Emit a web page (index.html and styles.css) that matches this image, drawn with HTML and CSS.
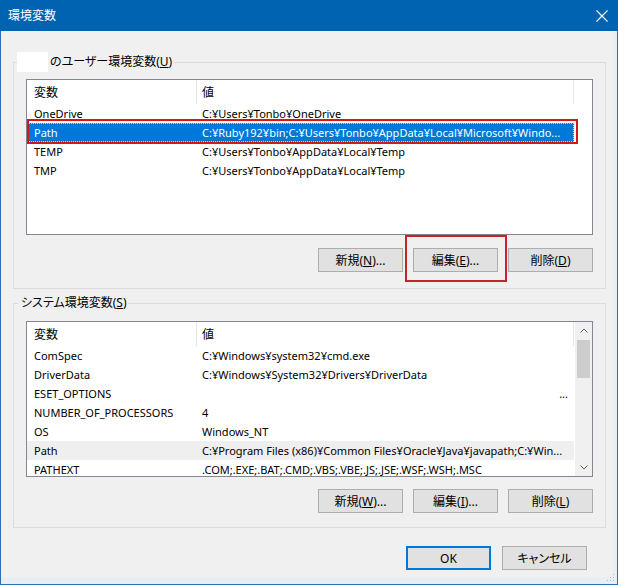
FILE: index.html
```html
<!DOCTYPE html>
<html lang="ja">
<head>
<meta charset="utf-8">
<title>環境変数</title>
<link rel="stylesheet" href="styles.css">
</head>
<body>
<div class="window">
  <div class="titlebar">
    <span class="title">環境変数</span>
    <svg class="close" width="12" height="12" viewBox="0 0 12 12"><path d="M0.5 0.5L11.5 11.5M11.5 0.5L0.5 11.5" stroke="#fff" stroke-width="1.1" fill="none"/></svg>
  </div>
  <div class="client">
    <fieldset class="group group-user">
      <legend><span class="masked"></span>のユーザー環境変数(<u>U</u>)</legend>
      <div class="group-inner inner-user">
        <div class="list">
          <div class="list-body">
            <div class="list-head">
              <div class="cell-name">変数</div>
              <div class="cell-value">値</div>
            </div>
            <div class="row"><div class="cell-name">OneDrive</div><div class="cell-value">C:¥Users¥Tonbo¥OneDrive</div></div>
            <div class="row selected"><div class="cell-name">Path</div><div class="cell-value">C:¥Ruby192¥bin;C:¥Users¥Tonbo¥AppData¥Local¥Microsoft¥Windo...</div></div>
            <div class="row"><div class="cell-name">TEMP</div><div class="cell-value">C:¥Users¥Tonbo¥AppData¥Local¥Temp</div></div>
            <div class="row"><div class="cell-name">TMP</div><div class="cell-value">C:¥Users¥Tonbo¥AppData¥Local¥Temp</div></div>
          </div>
        </div>
        <div class="buttons">
          <button class="btn">新規(<u>N</u>)...</button>
          <button class="btn">編集(<u>E</u>)...</button>
          <button class="btn">削除(<u>D</u>)</button>
        </div>
      </div>
    </fieldset>

    <fieldset class="group group-system">
      <legend>システム環境変数(<u>S</u>)</legend>
      <div class="group-inner inner-system">
        <div class="list">
          <div class="list-body">
            <div class="list-head">
              <div class="cell-name">変数</div>
              <div class="cell-value">値</div>
            </div>
            <div class="row"><div class="cell-name">ComSpec</div><div class="cell-value">C:¥Windows¥system32¥cmd.exe</div></div>
            <div class="row"><div class="cell-name">DriverData</div><div class="cell-value">C:¥Windows¥System32¥Drivers¥DriverData</div></div>
            <div class="row"><div class="cell-name">ESET_OPTIONS</div><div class="cell-value value-right">...</div></div>
            <div class="row"><div class="cell-name">NUMBER_OF_PROCESSORS</div><div class="cell-value">4</div></div>
            <div class="row"><div class="cell-name">OS</div><div class="cell-value">Windows_NT</div></div>
            <div class="row hover"><div class="cell-name">Path</div><div class="cell-value">C:¥Program Files (x86)¥Common Files¥Oracle¥Java¥javapath;C:¥Win...</div></div>
            <div class="row"><div class="cell-name">PATHEXT</div><div class="cell-value">.COM;.EXE;.BAT;.CMD;.VBS;.VBE;.JS;.JSE;.WSF;.WSH;.MSC</div></div>
          </div>
          <div class="scrollbar">
            <div class="sb-btn"><svg width="8" height="5" viewBox="0 0 8 5"><path d="M0.5 4.5L4 1L7.5 4.5" stroke="#606060" fill="none"/></svg></div>
            <div class="sb-track"><div class="sb-thumb"></div></div>
            <div class="sb-btn"><svg width="8" height="5" viewBox="0 0 8 5"><path d="M0.5 0.5L4 4L7.5 0.5" stroke="#606060" fill="none"/></svg></div>
          </div>
        </div>
        <div class="buttons">
          <button class="btn">新規(<u>W</u>)...</button>
          <button class="btn">編集(<u>I</u>)...</button>
          <button class="btn">削除(<u>L</u>)</button>
        </div>
      </div>
    </fieldset>

    <div class="footer">
      <button class="btn btn-default">OK</button>
      <button class="btn">キャンセル</button>
    </div>
  </div>

  <div class="mark mark-row"></div>
  <div class="mark mark-edit"></div>
  <svg class="grip" width="9" height="9" viewBox="0 0 9 9">
    <rect x="7" y="1" width="1" height="1" fill="#b8b8b8"/>
    <rect x="4" y="4" width="1" height="1" fill="#b8b8b8"/>
    <rect x="7" y="4" width="1" height="1" fill="#b8b8b8"/>
    <rect x="1" y="7" width="1" height="1" fill="#b8b8b8"/>
    <rect x="4" y="7" width="1" height="1" fill="#b8b8b8"/>
    <rect x="7" y="7" width="1" height="1" fill="#b8b8b8"/>
  </svg>
</div>
</body>
</html>
```

FILE: styles.css
```css
* { box-sizing: border-box; }

html, body {
  margin: 0;
  padding: 0;
}

body {
  width: 618px;
  height: 585px;
  overflow: hidden;
  background: #fff;
  font-family: "Noto Sans", "Noto Sans CJK JP", sans-serif;
  font-size: 12px;
  color: #000;
  font-feature-settings: "palt";
}

.window {
  position: relative;
  width: 618px;
  height: 585px;
  border: 1px solid #2a6fb0;
  border-top: 0;
  background: #f0f0f0;
  display: flex;
  flex-direction: column;
}

.titlebar {
  height: 31px;
  margin: 0 -1px;
  background: #0063b1;
  color: #fff;
  display: flex;
  align-items: center;
  justify-content: space-between;
  padding: 0 10px 0 8px;
  flex: none;
}

.title {
  font-size: 12px;
  line-height: 1;
}

.client {
  flex: 1;
  padding: 21px 7px 0 12px;
  border-right: 4px solid #e9eef3;
  border-bottom: 7px solid #e9eef3;
  display: flex;
  flex-direction: column;
}

.group {
  margin: 0;
  padding: 0;
  min-width: 0;
  border: 1px solid #dcdcdc;
}

.group legend {
  height: 20px;
  line-height: 20px;
  padding: 0 2px 0 0;
  margin-left: 3px;
  white-space: nowrap;
}

.masked {
  display: inline-block;
  width: 31px;
  height: 20px;
  background: #fff;
  vertical-align: top;
  margin-right: 2px;
}

.group-system {
  margin-top: 4px;
}

.group-system legend {
  margin-left: 5px;
  padding: 0 2px;
}

.inner-user {
  padding: 7px 12px 16px;
}

.inner-system {
  padding: 8px 12px 14px;
}

.inner-system .buttons {
  margin-top: 12px;
}

.list {
  height: 156px;
  border: 1px solid #828790;
  background: #fff;
  display: flex;
  overflow: hidden;
}

.list-body {
  width: 548px;
  flex: none;
}

.list-head {
  display: flex;
  height: 24px;
  align-items: stretch;
}

.list-head .cell-name,
.list-head .cell-value {
  display: flex;
  align-items: center;
  border-right: 1px solid #e5e5e5;
  font-size: 12px;
}

.cell-name {
  width: 170px;
  padding-left: 7px;
  white-space: nowrap;
  overflow: hidden;
  flex: none;
}

.cell-value {
  width: 377px;
  padding-left: 5px;
  padding-right: 4px;
  white-space: nowrap;
  overflow: hidden;
  text-overflow: ellipsis;
  flex: none;
}

.value-right {
  text-align: right;
  padding-right: 6px;
}

.row {
  display: flex;
  height: 19px;
  line-height: 19px;
  width: 547px;
  font-size: 11px;
}

.row.selected {
  background: #0078d7;
  color: #fff;
  outline: 1px dotted rgba(255, 255, 255, 0.7);
  outline-offset: -1px;
}

.row.hover {
  background: #efefef;
}

.scrollbar {
  width: 17px;
  flex: none;
  background: #f0f0f0;
  display: flex;
  flex-direction: column;
}

.sb-btn {
  height: 17px;
  display: flex;
  align-items: center;
  justify-content: center;
  flex: none;
}

.sb-track {
  flex: 1;
  padding: 1px 2px;
}

.sb-thumb {
  height: 38px;
  background: #cdcdcd;
}

.buttons {
  display: flex;
  justify-content: flex-end;
  gap: 10px;
  margin-top: 13px;
}

.btn {
  width: 85px;
  height: 24px;
  margin: 0;
  padding: 0;
  background: #e1e1e1;
  border: 1px solid #adadad;
  font-family: "Noto Sans", "Noto Sans CJK JP", sans-serif;
  font-size: 12px;
  color: #000;
  font-feature-settings: "palt";
}

.btn-default {
  border-color: #0078d7;
  box-shadow: inset 0 0 0 1px #0078d7;
}

.footer {
  display: flex;
  justify-content: flex-end;
  gap: 11px;
  margin-top: 18px;
  margin-right: 19px;
}

.mark {
  position: absolute;
  border: 2px solid #cc1a22;
  pointer-events: none;
}

.mark-row {
  left: 26px;
  top: 119px;
  width: 551px;
  height: 25px;
}

.mark-edit {
  left: 404px;
  top: 235px;
  width: 102px;
  height: 47px;
  border-color: #c0262d;
}

.grip {
  position: absolute;
  right: 2px;
  bottom: 2px;
}
```
